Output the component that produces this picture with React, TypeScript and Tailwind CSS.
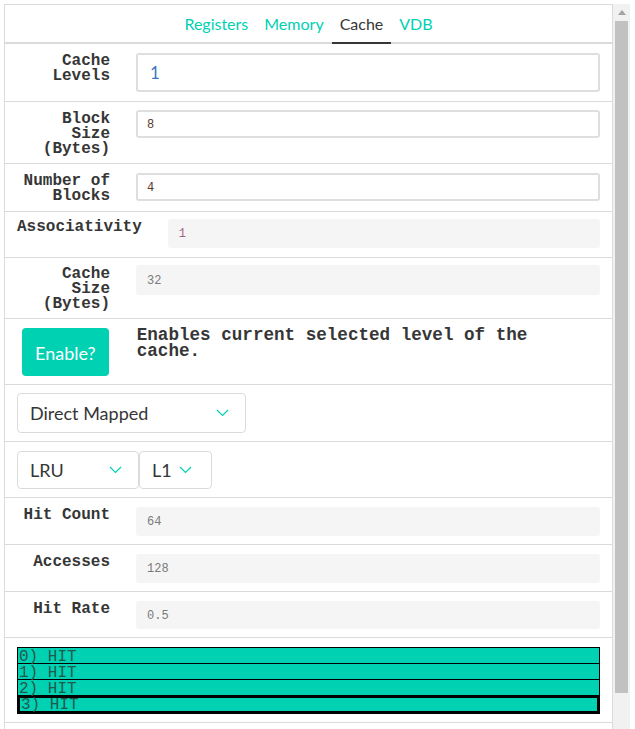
import React from "react";

const mono = "font-['Liberation_Mono','Courier_New',monospace]";
const sans = "font-['Lato','Noto_Sans',sans-serif]";

const labelCls = `${mono} mt-[3px] text-[16px] font-bold leading-[15px] text-[#363636] text-right min-w-[93px]`;

function Row({ className, children }: { className: string; children: React.ReactNode }) {
  return <div className={`flex items-start border-b border-[#dbdbdb] px-3 ${className}`}>{children}</div>;
}

function Label({ lines }: { lines: string[] }) {
  return (
    <div className={labelCls}>
      {lines.map((l) => (
        <div key={l}>{l}</div>
      ))}
    </div>
  );
}

function ReadOnly({ value, color, className }: { value: string; color: string; className: string }) {
  return (
    <div className={`flex flex-1 items-center rounded-[3px] bg-[#f5f5f5] pl-[11px] pt-[1px] ${mono} text-[12px] ${color} ${className}`}>
      {value}
    </div>
  );
}

function Chevron() {
  return (
    <svg width="13" height="8" viewBox="0 0 13 8" className="shrink-0">
      <polyline points="1,1 6.5,6.5 12,1" fill="none" stroke="#00d1b2" strokeWidth="1.2" />
    </svg>
  );
}

function Select({ text, className }: { text: string; className: string }) {
  return (
    <div
      className={`flex items-center justify-between rounded-[4px] border border-[#dbdbdb] bg-white pl-3 ${sans} text-[18px] text-[#363636] ${className}`}
    >
      <span>{text}</span>
      <Chevron />
    </div>
  );
}

export default function App() {
  const tabs = ["Registers", "Memory", "Cache", "VDB"];
  const hits = ["0) HIT", "1) HIT", "2) HIT"];

  return (
    <div className="flex h-[729px] overflow-hidden bg-white pl-1 pt-1">
      {/* panel */}
      <div className="w-[609px] border-l border-r border-t border-[#dbdbdb]">
        {/* tabs */}
        <div className={`flex justify-center border-b-2 border-[#dbdbdb] ${sans} text-[16px]`}>
          {tabs.map((t) => (
            <div
              key={t}
              className={`-mb-[2px] flex h-[39px] items-center border-b-2 px-2 pt-[1px] ${
                t === "Cache" ? "border-[#363636] text-[#363636]" : "border-transparent text-[#00d1b2]"
              }`}
            >
              {t}
            </div>
          ))}
        </div>

        {/* Cache levels */}
        <Row className="gap-[26px] pb-[9px] pt-[7px]">
          <Label lines={["Cache", "Levels"]} />
          <div className="mt-[2px] flex h-[39px] flex-1 items-center rounded-[3px] border-2 border-[#dedede] bg-white pl-3 pt-[1px]">
            <span className={`${sans} text-[17px] text-[#3b78c0]`}>1</span>
          </div>
        </Row>

        {/* Block size */}
        <Row className="gap-[26px] pb-[6px] pt-[7px]">
          <Label lines={["Block", "Size", "(Bytes)"]} />
          <div className={`mt-[1px] flex h-[28px] flex-1 items-center rounded-[3px] border-2 border-[#dedede] bg-white pl-[9px] pt-[1px] ${mono} text-[12px] text-[#5b3a29]`}>
            8
          </div>
        </Row>

        {/* Number of blocks */}
        <Row className="gap-[26px] pb-[7px] pt-[7px]">
          <Label lines={["Number of", "Blocks"]} />
          <div className={`mt-[2px] flex h-[28px] flex-1 items-center rounded-[3px] border-2 border-[#dedede] bg-white pl-[9px] pt-[1px] ${mono} text-[12px] text-[#5b3a29]`}>
            4
          </div>
        </Row>

        {/* Associativity */}
        <Row className="gap-[26px] pb-[9px] pt-[5px]">
          <Label lines={["Associativity"]} />
          <ReadOnly value="1" color="text-[#a0647a]" className="mt-[2px] h-[29px]" />
        </Row>

        {/* Cache size */}
        <Row className="gap-[26px] pb-[6px] pt-[6px]">
          <Label lines={["Cache", "Size", "(Bytes)"]} />
          <ReadOnly value="32" color="text-[#7a7a7a]" className="mt-[1px] h-[30px]" />
        </Row>

        {/* Enable */}
        <Row className="gap-[28px] pb-[8px] pt-[9px]">
          <button className={`ml-[5px] flex h-[48px] w-[87px] items-center justify-center rounded-[4px] bg-[#00d1b2] pt-[3px] ${sans} text-[18px] text-white`}>
            Enable?
          </button>
          <p className={`-mt-[1px] ${mono} text-[17.6px] font-bold leading-[16px] text-[#363636]`}>
            Enables current selected level of the cache.
          </p>
        </Row>

        {/* Mapping */}
        <Row className="pb-[8px] pt-[8px]">
          <Select text="Direct Mapped" className="h-[40px] w-[229px] pr-[16px]" />
        </Row>

        {/* Policy / level */}
        <Row className="pb-[8px] pt-[9px]">
          <Select text="LRU" className="h-[38px] w-[122px] pr-[16px]" />
          <Select text="L1" className="h-[38px] w-[73px] pr-[19px]" />
        </Row>

        {/* Stats */}
        <Row className="gap-[26px] pb-[8px] pt-[7px]">
          <Label lines={["Hit Count"]} />
          <ReadOnly value="64" color="text-[#7a7a7a]" className="mt-[2px] h-[29px]" />
        </Row>
        <Row className="gap-[26px] pb-[8px] pt-[7px]">
          <Label lines={["Accesses"]} />
          <ReadOnly value="128" color="text-[#7a7a7a]" className="mt-[2px] h-[29px]" />
        </Row>
        <Row className="gap-[26px] pb-[8px] pt-[7px]">
          <Label lines={["Hit Rate"]} />
          <ReadOnly value="0.5" color="text-[#7a7a7a]" className="mt-[2px] h-[28px]" />
        </Row>

        {/* Access log */}
        <Row className="pb-[8px] pt-[9px]">
          <div className={`flex-1 ${mono} text-[16px] leading-[15px] text-[#22594d]`}>
            {hits.map((h) => (
              <div key={h} className="h-[16px] border-l border-r border-t border-black bg-[#00d1b2] pl-[1px] pt-[2px]">
                {h}
              </div>
            ))}
            <div className="h-[19px] border-[3px] border-black bg-[#00d1b2] pl-[1px] pt-[1px] leading-[13px]">3) HIT</div>
          </div>
        </Row>
      </div>

      {/* scrollbar */}
      <div className="flex w-[17px] flex-col bg-[#f1f1f1]">
        <div className="flex h-[17px] items-center justify-center">
          <svg width="8" height="5" viewBox="0 0 8 5">
            <polygon points="0,5 4,0 8,5" fill="#a3a3a3" />
          </svg>
        </div>
        <div className="mx-[2px] h-[672px] bg-[#c1c1c1]" />
      </div>
    </div>
  );
}
